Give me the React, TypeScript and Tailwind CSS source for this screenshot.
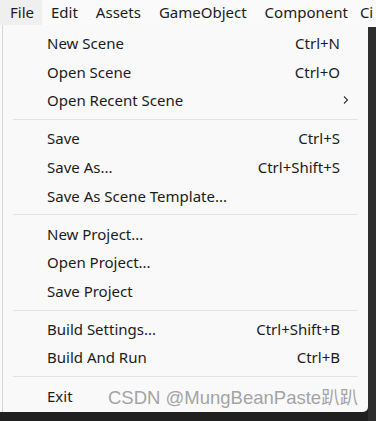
import { Fragment } from "react";

type Item =
  | { kind: "item"; label: string; shortcut?: string; submenu?: boolean }
  | { kind: "sep" };

const topMenus = ["File", "Edit", "Assets", "GameObject", "Component", "Ci"];

const items: Item[] = [
  { kind: "item", label: "New Scene", shortcut: "Ctrl+N" },
  { kind: "item", label: "Open Scene", shortcut: "Ctrl+O" },
  { kind: "item", label: "Open Recent Scene", submenu: true },
  { kind: "sep" },
  { kind: "item", label: "Save", shortcut: "Ctrl+S" },
  { kind: "item", label: "Save As...", shortcut: "Ctrl+Shift+S" },
  { kind: "item", label: "Save As Scene Template..." },
  { kind: "sep" },
  { kind: "item", label: "New Project..." },
  { kind: "item", label: "Open Project..." },
  { kind: "item", label: "Save Project" },
  { kind: "sep" },
  { kind: "item", label: "Build Settings...", shortcut: "Ctrl+Shift+B" },
  { kind: "item", label: "Build And Run", shortcut: "Ctrl+B" },
  { kind: "sep" },
  { kind: "item", label: "Exit" },
];

export default function App() {
  return (
    <div
      className="relative w-[376px] h-[421px] overflow-hidden bg-[#202020] flex flex-col text-[15px] text-[#1b1b1b]"
      style={{ fontFamily: '"Noto Sans", "Open Sans", sans-serif' }}
    >
      {/* menu bar */}
      <div className="h-[25px] bg-[#fafafa] flex items-center whitespace-nowrap shrink-0">
        {topMenus.map((m, i) => (
          <div
            key={m}
            className={
              i === 0
                ? "h-full flex items-center pl-[10px] pr-[8px] bg-[#efefef]"
                : m === "Component"
                ? "h-full flex items-center pl-[9px] pr-[3px]"
                : "h-full flex items-center px-[9px]"
            }
          >
            {m}
          </div>
        ))}
      </div>

      <div className="flex flex-1 min-h-0">
        <div className="w-[2px] bg-[#fafafa] h-[387px]" />
        <div className="w-[366px] h-[387px] bg-[#f9f9f9] border-l border-[#d6d6d6] rounded-br-[5px] pt-[4px] flex flex-col">
          {items.map((it, i) =>
            it.kind === "sep" ? (
              <div key={i} className="h-[9.5px] flex items-center px-[10px]">
                <div className="h-px w-full bg-[#e3e3e3]" />
              </div>
            ) : (
              <Fragment key={i}>
                <div className="h-[28.6px] flex items-center justify-between pl-[44px] pr-[18px]">
                  <span>{it.label}</span>
                  {it.submenu ? (
                    <svg width="6" height="10" viewBox="0 0 6 10" className="mr-[1px]">
                      <path d="M1 1.5 L4.5 5 L1 8.5" fill="none" stroke="#333" strokeWidth="1.1" />
                    </svg>
                  ) : it.shortcut ? (
                    <span className="mr-[10px]">{it.shortcut}</span>
                  ) : null}
                </div>
              </Fragment>
            )
          )}
        </div>
        <div className="flex-1 flex flex-col">
          <div className="h-[2px] bg-[#fafafa]" />
          <div className="flex-1 bg-[#2e2e2e]" />
        </div>
      </div>

      <div
        className="absolute left-[108px] top-[384px] text-[18.5px] text-[#a3a3a3] whitespace-nowrap"
        style={{
          fontFamily: '"Liberation Sans", "Noto Sans CJK SC", sans-serif',
          textShadow: "0 0 1px #ffffff",
        }}
      >
        CSDN @MungBeanPaste趴趴
      </div>
    </div>
  );
}
